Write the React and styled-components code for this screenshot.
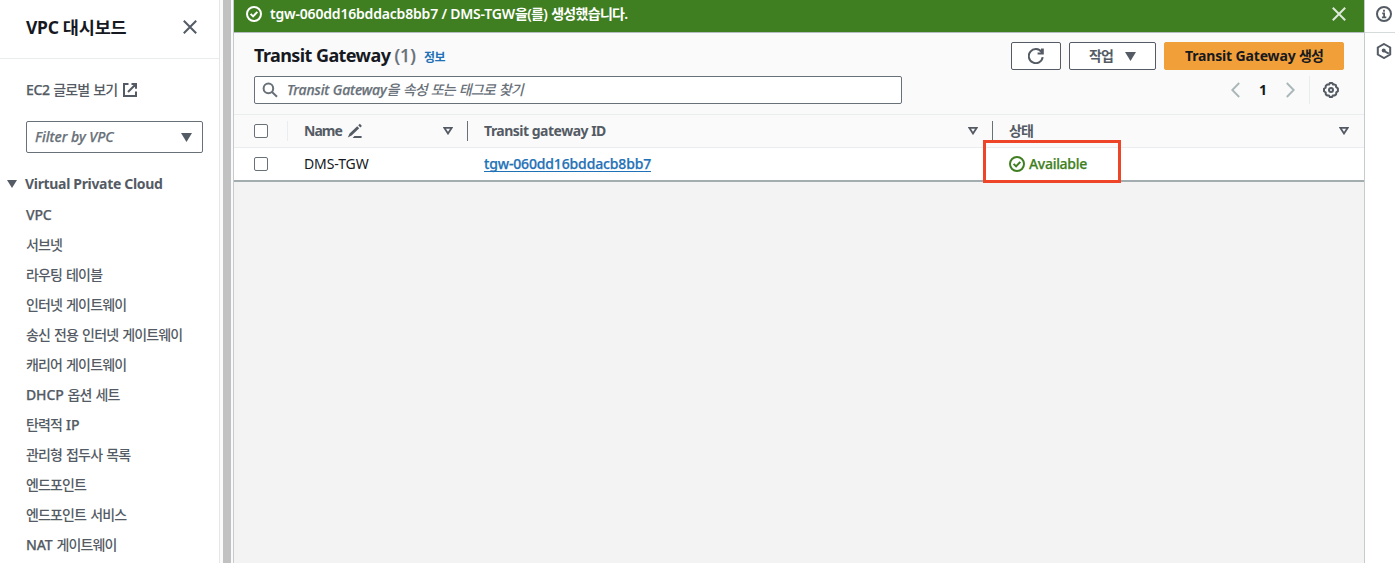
import React from "react";
import styled, { createGlobalStyle, css } from "styled-components";

const GlobalStyle = createGlobalStyle`
  *, *::before, *::after { box-sizing: border-box; }
  html, body { margin: 0; padding: 0; }
  body {
    font-family: "Noto Sans", "Noto Sans CJK KR", sans-serif;
    font-size: 14px;
    color: #16191f;
    overflow: hidden;
  }
  svg { display: block; flex: none; }
`;

const Page = styled.div`
  display: flex;
  width: 1395px;
  height: 563px;
  background: #fff;
  overflow: hidden;
`;

const Text = styled.span`
  display: inline-block;
  white-space: nowrap;
  line-height: 20px;
  font-size: ${(p) => p.$size || 14}px;
  font-weight: ${(p) => p.$weight || 400};
  color: ${(p) => p.$color || "inherit"};
  letter-spacing: ${(p) => p.$track || 0}px;
  font-style: ${(p) => (p.$italic ? "italic" : "normal")};
  -webkit-text-stroke: ${(p) => (p.$weight === 500 ? "0.25px" : "0")};
`;

const Hangul = styled.span`
  letter-spacing: ${(p) => p.$track ?? -0.85}px;
  word-spacing: 1.2px;
  -webkit-text-stroke: 0;
`;

/* Sidebar */
const Sidebar = styled.nav`
  width: 220px;
  flex: none;
  border-right: 1px solid #e4e6e7;
  color: #545b64;
`;

const SidebarHeader = styled.div`
  display: flex;
  align-items: center;
  justify-content: space-between;
  height: 59px;
  padding: 0 21px 4px 26px;
  border-bottom: 1px solid #eaeded;
`;

const GlobalViewLink = styled.div`
  display: flex;
  align-items: center;
  gap: 5px;
  padding: 21px 0 0 26px;
`;

const VpcFilter = styled.div`
  display: flex;
  align-items: center;
  justify-content: space-between;
  width: 177px;
  height: 32px;
  margin: 21px 0 0 26px;
  padding: 0 10px 0 8px;
  border: 1px solid #687078;
  border-radius: 2px;
`;

const SectionTitle = styled.div`
  display: flex;
  align-items: center;
  gap: 8px;
  padding: 21px 0 6px 7px;
`;

const NavList = styled.ul`
  list-style: none;
  margin: 0;
  padding: 0 0 0 26px;
`;

const NavItem = styled.li`
  display: flex;
  align-items: center;
  height: 30px;
`;

const ScrollGutter = styled.div`
  width: 14px;
  flex: none;
  padding-left: 3px;
  background: #fafafa;
  border-right: 1px solid #c5cbcf;
`;

const ScrollThumb = styled.div`
  width: 8px;
  height: 100%;
  background: #c1c1c1;
`;

/* Main content */
const Main = styled.main`
  width: 1131px;
  flex: none;
  background: #f3f3f3;
  border-right: 1px solid #c5cbcf;
`;

const Flashbar = styled.div`
  display: flex;
  align-items: center;
  height: 32px;
  padding: 0 17px 4px 12px;
  gap: 8px;
  background: #3f7f21;
  color: #fff;
  & > :last-child { margin-left: auto; }
`;

const TableHeader = styled.header`
  height: 83px;
  padding: 9px 20px 0 20px;
  background: #fafafa;
  border-top: 1px solid #b5bdc2;
  border-bottom: 1px solid #eaeded;
`;

const HeaderRow = styled.div`
  display: flex;
  align-items: center;
  justify-content: space-between;
  height: 28px;
  margin-bottom: 6px;
`;

const TitleGroup = styled.div`
  display: flex;
  align-items: baseline;
`;

const InfoLink = styled(Text)`
  margin-left: 8px;
  color: #1f72b8;
`;

const Actions = styled.div`
  display: flex;
  gap: 8px;
`;

const Button = styled.button`
  display: flex;
  align-items: center;
  justify-content: center;
  gap: 12px;
  width: ${(p) => p.$width}px;
  height: 28px;
  padding: 0;
  font-family: inherit;
  border: 1px solid #545b64;
  border-radius: 2px;
  background: #fff;
  color: #545b64;
  ${(p) =>
    p.$primary &&
    css`
      background: #f19f38;
      border-color: #f19f38;
      color: #16191f;
    `}
`;

const SearchBox = styled.div`
  display: flex;
  align-items: center;
  gap: 9px;
  width: 648px;
  height: 28px;
  padding: 0 7px;
  border: 1px solid #687078;
  border-radius: 2px;
  background: #fff;
  color: #687078;
`;

const Pager = styled.div`
  display: flex;
  align-items: center;
  height: 28px;
`;

const PageNumber = styled.div`
  width: 46px;
  text-align: center;
`;

const Preferences = styled.div`
  display: flex;
  align-items: center;
  height: 28px;
  margin-left: 14px;
  padding: 0 5px 0 13px;
  border-left: 1px solid #eaeded;
`;

const Row = styled.div`
  display: grid;
  grid-template-columns: 54px 180px 525px 1fr;
  height: ${(p) => (p.$head ? 33 : 34)}px;
  background: ${(p) => (p.$head ? "#fafafa" : "#fff")};
  border-bottom: ${(p) => (p.$head ? "1px solid #eaeded" : "2px solid #a3adb0")};
`;

const Cell = styled.div`
  position: relative;
  display: flex;
  align-items: center;
  gap: ${(p) => p.$gap || 0}px;
  padding-left: ${(p) => (p.$check ? 20 : 16)}px;
  padding-right: 15px;
`;

const HeadCell = styled(Cell)`
  color: #545b64;
  & > .sort { margin-left: auto; }
  &::after {
    content: "";
    position: absolute;
    right: 0;
    top: 6px;
    width: 1px;
    height: 20px;
    background: ${(p) => p.$line || "transparent"};
  }
`;

const Checkbox = styled.span`
  width: 14px;
  height: 14px;
  flex: none;
  border: 1px solid #687078;
  border-radius: 2px;
  background: #fff;
`;

const IdLink = styled(Text)`
  color: #1f72b8;
  line-height: 15px;
  height: 16px;
  margin-bottom: 1px;
  border-bottom: 1px solid #1f72b8;
`;

const Status = styled.div`
  display: flex;
  align-items: center;
  gap: 4px;
  color: #3f7f21;
`;

const Highlight = styled.div`
  position: absolute;
  left: -10px;
  top: -8px;
  width: 138px;
  height: 43px;
  border: 3px solid #ee4427;
  z-index: 1;
`;

/* Right rail */
const Rail = styled.aside`
  flex: 1;
  background: #fff;
  color: #545b64;
`;

const RailItem = styled.div`
  display: flex;
  height: ${(p) => p.$height}px;
  padding: ${(p) => p.$top}px 0 0 11px;
  border-bottom: ${(p) => (p.$line ? "1px solid #d5dbdb" : "none")};
`;

/* Icons */
const Svg = ({ size = 16, children, ...rest }) => (
  <svg width={size} height={size} viewBox="0 0 16 16" fill="none" stroke="currentColor" strokeWidth="2" {...rest}>
    {children}
  </svg>
);
const Close = ({ color, width = 2 }) => (
  <Svg color={color} strokeWidth={width}>
    <path d="M1.8 1.8 14.2 14.2M14.2 1.8 1.8 14.2" />
  </Svg>
);
const External = () => (
  <Svg>
    <path d="M6.5 2H2v12h12V9.5M9.5 2H14v4.8M14 2 6 10" />
  </Svg>
);
const Caret = ({ w = 10, h = 8 }) => (
  <svg width={w} height={h} viewBox="0 0 10 8" fill="#545b64"><path d="M0 0h10L5 8z" /></svg>
);
const Sort = () => (
  <svg className="sort" width="10" height="8" viewBox="0 0 10 8" fill="none" stroke="#545b64" strokeWidth="1.8">
    <path d="M1.4.9h7.2L5 6.5z" />
  </svg>
);
const CheckCircle = () => (
  <Svg strokeWidth="2">
    <circle cx="8" cy="8" r="7" />
    <path d="M4.6 7.9 7.1 10.4 11.3 5.8" />
  </Svg>
);
const Magnifier = () => (
  <Svg>
    <circle cx="6.4" cy="6.4" r="4.8" />
    <path d="M10 10 15 14.8" />
  </Svg>
);
const Pencil = () => (
  <Svg stroke="none" fill="currentColor">
    <path d="M2.6 10.4 10.2 3.2l2 2.1-7.6 7.2L.8 14.6zM11.2 2.3 12.9.8l2 2.1-1.6 1.5zM7.4 13H14.6v1.9H5.6z" />
  </Svg>
);
const Refresh = () => (
  <Svg>
    <path d="M14.7 9.2A7 7 0 1 1 13.6 4.2" />
    <path d="M15.8.4V6.600H9.600V4.600H13V.4z" fill="currentColor" stroke="none" />
  </Svg>
);
const Chevron = ({ right }) => (
  <svg width="9" height="16" viewBox="0 0 9 16" fill="none" stroke="#aab7b8" strokeWidth="1.9">
    <path d={right ? "M.8 1 7.7 8 .8 15" : "M8.2 1 1.3 8l6.9 7"} />
  </svg>
);
const Gear = () => (
  <Svg color="#545b64">
    <path
      strokeLinejoin="round"
      d="M6.800 1h2.400l.800 1.500 1-.200L12.900 3.100l.1 1.700L14.900 6.600v2.600L13.300 10.400l-.200 2-1.700 1.200-1.600-.200L9.200 15H6.800l-.800-1.600-1.600.200-1.600-1.200-.100-1.900L1 9.300V6.700L2.600 5.600l.200-1.900 1.700-1.300 1.600.200z"
    />
    <circle cx="8" cy="8" r="2" />
  </Svg>
);
const Info = () => (
  <Svg strokeWidth="2">
    <circle cx="8" cy="8" r="7" />
    <path d="M8 3.8v1.900M6.200 7.400H8.100v3.800M5.900 11.300h4.400" strokeWidth="1.8" />
  </Svg>
);
const Hexagon = () => (
  <Svg strokeWidth="2">
    <path d="M8 1 14.200 4.500v7L8 15 1.800 11.500v-7z" />
    <circle cx="7.7" cy="7.6" r="2" fill="currentColor" stroke="none" />
    <path d="M8 8 12.800 10.700" />
  </Svg>
);

const navItems = [
  "VPC",
  "서브넷",
  "라우팅 테이블",
  "인터넷 게이트웨이",
  "송신 전용 인터넷 게이트웨이",
  "캐리어 게이트웨이",
  "DHCP 옵션 세트",
  "탄력적 IP",
  "관리형 접두사 목록",
  "엔드포인트",
  "엔드포인트 서비스",
  "NAT 게이트웨이",
];

/* Latin acronyms keep their natural spacing, Hangul is set tighter */
const Mixed = ({ children }) =>
  children
    .split(/([A-Z]{2,})/)
    .filter(Boolean)
    .map((part, i) => (/^[A-Z]/.test(part) ? <span key={i}>{part}</span> : <Hangul key={i}>{part}</Hangul>));

export default function App() {
  return (
    <Page>
      <GlobalStyle />
      <Sidebar>
        <SidebarHeader>
          <Text $size={17.5} $weight={700} $track={-0.3} $color="#16191f">
            VPC <Hangul $track={-0.2}>대시보드</Hangul>
          </Text>
          <Close />
        </SidebarHeader>
        <GlobalViewLink>
          <Text $weight={500} $track={-0.3}>EC2 <Hangul>글로벌 보기</Hangul></Text>
          <External />
        </GlobalViewLink>
        <VpcFilter>
          <Text $italic $weight={500} $track={0} $color="#687078">Filter by VPC</Text>
          <Caret w={11} h={9} />
        </VpcFilter>
        <SectionTitle>
          <Caret />
          <Text $weight={700} $track={-0.33}>Virtual Private Cloud</Text>
        </SectionTitle>
        <NavList>
          {navItems.map((item) => (
            <NavItem key={item}>
              <Text $weight={500} $track={-0.15}><Mixed>{item}</Mixed></Text>
            </NavItem>
          ))}
        </NavList>
      </Sidebar>
      <ScrollGutter><ScrollThumb /></ScrollGutter>
      <Main>
        <Flashbar>
          <CheckCircle />
          <Text $weight={600} $track={-0.19}>
            tgw-060dd16bddacb8bb7 / DMS-TGW<Hangul $track={-0.7}>을(를) 생성했습니다.</Hangul>
          </Text>
          <Close color="#dfe9da" />
        </Flashbar>
        <TableHeader>
          <HeaderRow>
            <TitleGroup>
              <Text $size={18} $weight={700} $track={-0.58}>Transit Gateway&nbsp;</Text>
              <Text $size={18} $weight={500} $color="#687078">(1)</Text>
              <InfoLink $size={12} $weight={700}><Hangul $track={-0.6}>정보</Hangul></InfoLink>
            </TitleGroup>
            <Actions>
              <Button $width={50}><Refresh /></Button>
              <Button $width={87}>
                <Text $weight={700}><Hangul>작업</Hangul></Text>
                <Caret w={11} h={9} />
              </Button>
              <Button $width={180} $primary>
                <Text $weight={700} $track={-0.15}>Transit Gateway <Hangul>생성</Hangul></Text>
              </Button>
            </Actions>
          </HeaderRow>
          <HeaderRow>
            <SearchBox>
              <Magnifier />
              <Text $italic $weight={500} $track={-0.12}>Transit Gateway<Hangul>을 속성 또는 태그로 찾기</Hangul></Text>
            </SearchBox>
            <Pager>
              <Chevron />
              <PageNumber><Text $weight={700}>1</Text></PageNumber>
              <Chevron right />
              <Preferences><Gear /></Preferences>
            </Pager>
          </HeaderRow>
        </TableHeader>
        <Row $head>
          <HeadCell $check $line="#eaeded"><Checkbox /></HeadCell>
          <HeadCell $gap={5} $line="#687078">
            <Text $weight={700} $track={-1}>Name</Text>
            <Pencil />
            <Sort />
          </HeadCell>
          <HeadCell $line="#687078">
            <Text $weight={700} $track={-0.5}>Transit gateway ID</Text>
            <Sort />
          </HeadCell>
          <HeadCell>
            <Text $weight={700}><Hangul>상태</Hangul></Text>
            <Sort />
          </HeadCell>
        </Row>
        <Row>
          <Cell $check><Checkbox /></Cell>
          <Cell><Text $track={-0.1}>DMS-TGW</Text></Cell>
          <Cell><IdLink $weight={500} $track={-0.15}>tgw-060dd16bddacb8bb7</IdLink></Cell>
          <Cell>
            <Status>
              <CheckCircle />
              <Text $weight={500} $track={-0.3}>Available</Text>
            </Status>
            <Highlight />
          </Cell>
        </Row>
      </Main>
      <Rail>
        <RailItem $height={33} $top={6} $line><Info /></RailItem>
        <RailItem $height={40} $top={10}><Hexagon /></RailItem>
      </Rail>
    </Page>
  );
}
